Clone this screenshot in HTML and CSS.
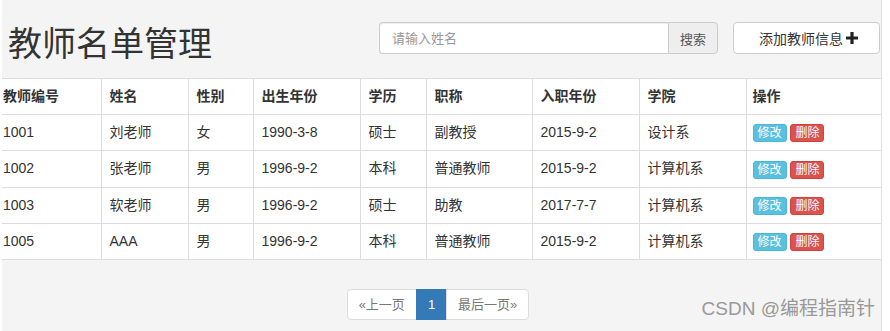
FILE: index.html
```html
<!DOCTYPE html>
<html lang="zh-CN">
<head>
  <meta charset="UTF-8" />
  <meta name="viewport" content="width=device-width, initial-scale=1.0"/>
  <title>教师名单管理</title>
  <link rel="stylesheet" href="styles.css">
</head>
<body>
  <div class="page">
    <div class="header">
      <h1>教师名单管理</h1>
      <div class="tools">
        <div class="search-group">
          <input type="text" class="search-input" placeholder="请输入姓名" />
          <button class="search-btn">搜索</button>
        </div>
        <button class="add-btn">添加教师信息
          <svg class="plus" width="12" height="12" viewBox="0 0 12 12"><path d="M4.4 0h3.2v4.4H12v3.2H7.6V12H4.4V7.6H0V4.4h4.4z" fill="#222"/></svg>
        </button>
      </div>
    </div>

    <table class="teachers">
      <colgroup>
        <col class="w-id"><col class="w-name"><col class="w-sex"><col class="w-birth"><col class="w-edu">
        <col class="w-title"><col class="w-join"><col class="w-dept"><col class="w-op">
      </colgroup>
      <thead>
        <tr>
          <th>教师编号</th><th>姓名</th><th>性别</th><th>出生年份</th><th>学历</th>
          <th>职称</th><th>入职年份</th><th>学院</th><th>操作</th>
        </tr>
      </thead>
      <tbody>
        <tr>
          <td>1001</td><td>刘老师</td><td>女</td><td>1990-3-8</td><td>硕士</td>
          <td>副教授</td><td>2015-9-2</td><td>设计系</td>
          <td><span class="btn-xs info">修改</span> <span class="btn-xs danger">删除</span></td>
        </tr>
        <tr>
          <td>1002</td><td>张老师</td><td>男</td><td>1996-9-2</td><td>本科</td>
          <td>普通教师</td><td>2015-9-2</td><td>计算机系</td>
          <td><span class="btn-xs info">修改</span> <span class="btn-xs danger">删除</span></td>
        </tr>
        <tr>
          <td>1003</td><td>软老师</td><td>男</td><td>1996-9-2</td><td>硕士</td>
          <td>助教</td><td>2017-7-7</td><td>计算机系</td>
          <td><span class="btn-xs info">修改</span> <span class="btn-xs danger">删除</span></td>
        </tr>
        <tr>
          <td>1005</td><td>AAA</td><td>男</td><td>1996-9-2</td><td>本科</td>
          <td>普通教师</td><td>2015-9-2</td><td>计算机系</td>
          <td><span class="btn-xs info">修改</span> <span class="btn-xs danger">删除</span></td>
        </tr>
      </tbody>
    </table>

    <div class="pager">
      <ul class="pagination">
        <li><a href="#">«上一页</a></li>
        <li class="active"><a href="#">1</a></li>
        <li><a href="#">最后一页»</a></li>
      </ul>
    </div>

    <div class="watermark">CSDN @编程指南针</div>
  </div>
</body>
</html>
```

FILE: styles.css
```css
body {
  margin: 0;
  background: #fff;
  font-family: "Liberation Sans", "Noto Sans CJK SC", sans-serif;
  font-size: 14px;
  color: #333;
}

.page {
  position: relative;
  margin-left: 2px;
  width: 879px;
  height: 331px;
  background: #f4f4f4;
  border-right: 1px solid #e2e2e2;
}

.header {
  display: flex;
  justify-content: space-between;
  height: 78px;
}

h1 {
  margin: 24px 0 0 6px;
  font-size: 34px;
  font-weight: normal;
  line-height: 40px;
  color: #333;
}

.tools {
  display: flex;
  gap: 15px;
  margin: 22px 1px 0 0;
  height: 32px;
}

.search-group {
  display: flex;
}

.search-input {
  box-sizing: border-box;
  width: 289px;
  height: 32px;
  padding: 0 12px;
  font-family: inherit;
  font-size: 13px;
  border: 1px solid #ccc;
  border-right: none;
  border-radius: 4px 0 0 4px;
  background: #fff;
  box-shadow: inset 0 1px 1px rgba(0, 0, 0, 0.075);
}

.search-input::placeholder {
  color: #999;
}

.search-btn {
  box-sizing: border-box;
  width: 50px;
  height: 32px;
  padding: 0;
  font-family: inherit;
  font-size: 13px;
  color: #555;
  background: #eee;
  border: 1px solid #ccc;
  border-radius: 0 4px 4px 0;
}

.add-btn {
  box-sizing: border-box;
  width: 147px;
  height: 32px;
  display: flex;
  align-items: center;
  justify-content: center;
  gap: 3px;
  padding: 0 0 0 4px;
  font-family: inherit;
  font-size: 14px;
  color: #333;
  background: #fff;
  border: 1px solid #ccc;
  border-radius: 4px;
}

.plus {
  display: block;
}

.teachers {
  width: 879px;
  table-layout: fixed;
  border-collapse: collapse;
  background: #fff;
}

.w-id { width: 99px; }
.w-name { width: 87px; }
.w-sex { width: 65px; }
.w-birth { width: 107px; }
.w-edu { width: 66px; }
.w-title { width: 106px; }
.w-join { width: 107px; }
.w-dept { width: 107px; }
.w-op { width: 135px; }

.teachers th,
.teachers td {
  padding: 8px;
  line-height: 19px;
  text-align: left;
  border: 1px solid #ddd;
  white-space: nowrap;
  overflow: hidden;
}

.teachers th {
  font-weight: bold;
}

.teachers th:first-child,
.teachers td:first-child {
  border-left: none;
  padding-left: 1px;
}

.teachers th:last-child,
.teachers td:last-child {
  border-right: none;
  padding-left: 6px;
}

.btn-xs {
  display: inline-block;
  padding: 0 4px;
  font-size: 12px;
  line-height: 16px;
  color: #fff;
  border-radius: 3px;
  border: 1px solid transparent;
  vertical-align: middle;
}

.btn-xs.info {
  background: #5bc0de;
  border-color: #46b8da;
}

.btn-xs.danger {
  background: #d9534f;
  border-color: #d43f3a;
}

.pager {
  display: flex;
  justify-content: center;
  padding: 29px 7px 0 0;
}

.pagination {
  display: flex;
  margin: 0;
  padding: 0;
  list-style: none;
}

.pagination a {
  display: block;
  padding: 5px 11px;
  font-size: 13px;
  line-height: 19px;
  color: #777;
  text-decoration: none;
  background: #fff;
  border: 1px solid #ddd;
  margin-left: -1px;
}

.pagination li:first-child a {
  margin-left: 0;
  border-radius: 4px 0 0 4px;
}

.pagination li:last-child a {
  border-radius: 0 4px 4px 0;
}

.pagination .active a {
  color: #fff;
  background: #337ab7;
  border-color: #337ab7;
}

.watermark {
  position: absolute;
  right: 6px;
  bottom: 11px;
  font-size: 19px;
  color: #999;
}
```
